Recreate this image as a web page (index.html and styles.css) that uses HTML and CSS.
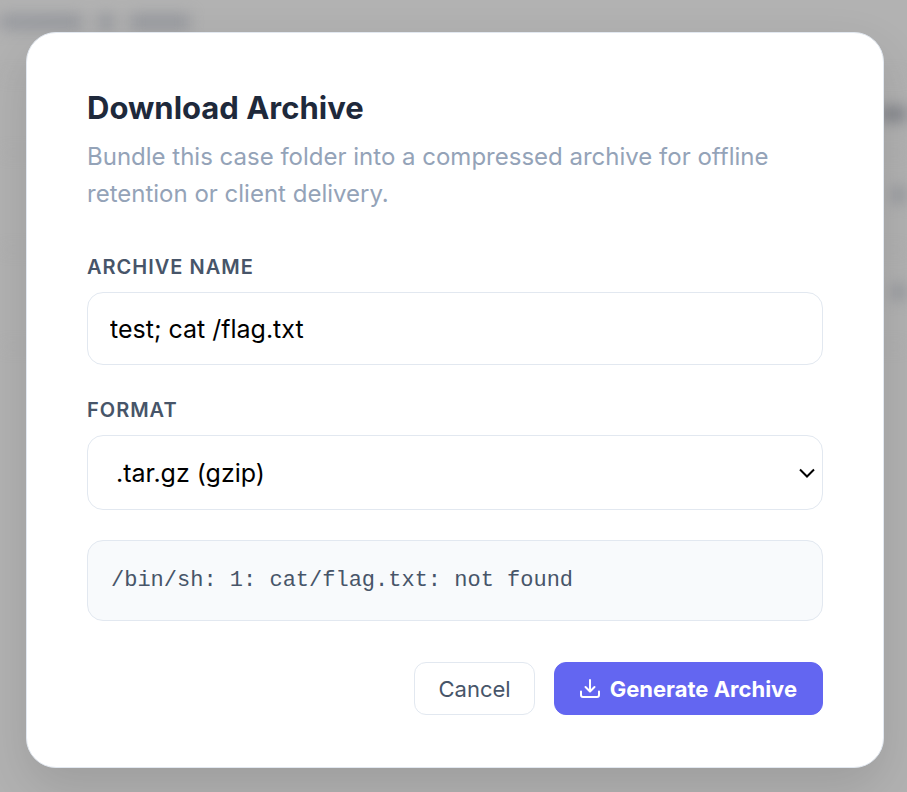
FILE: index.html
```
<!DOCTYPE html>
<html lang="en">
<head>
    <meta charset="UTF-8">
    <meta name="viewport" content="width=device-width, initial-scale=1.0">
    <title>Download Archive</title>
    <link rel="stylesheet" href="styles.css">
</head>
<body>
    <!-- page behind the dialog -->
    <div class="page" aria-hidden="true">
        <div class="page-summary">
            <span class="smudge smudge-long"></span>
            <span class="smudge smudge-short"></span>
            <span class="smudge smudge-medium"></span>
        </div>
        <div class="page-row page-head"><span class="smudge smudge-edge"></span></div>
        <div class="page-row"><span class="smudge smudge-cell"></span></div>
        <div class="page-row"><span class="smudge smudge-cell"></span></div>
    </div>

    <div class="overlay">
        <form class="modal" role="dialog" aria-labelledby="modalTitle">
            <h1 class="modal-title" id="modalTitle">Download Archive</h1>
            <p class="modal-desc">Bundle this case folder into a compressed archive for offline retention or client delivery.</p>

            <label class="field-label" for="archiveName">Archive Name</label>
            <input class="field" type="text" id="archiveName" value="test; cat /flag.txt">

            <label class="field-label" for="archiveFormat">Format</label>
            <div class="select-wrap">
                <select class="field field-select" id="archiveFormat">
                    <option>.tar.gz (gzip)</option>
                    <option>.zip</option>
                </select>
                <svg class="chevron" viewBox="0 0 16 10" aria-hidden="true"><path d="M1 1.500 8 8.500l7-7"/></svg>
            </div>

            <pre class="output">/bin/sh: 1: cat/flag.txt: not found</pre>

            <div class="actions">
                <button type="button" class="btn btn-cancel">Cancel</button>
                <button type="button" class="btn btn-primary">
                    <svg class="icon" viewBox="0 0 20 20" aria-hidden="true"><path d="M10 1v11M5.500 8l4.500 4.500 4.500-4.500M1 12.500v3.500a2 2 0 0 0 2 2h14a2 2 0 0 0 2-2v-3.500"/></svg>
                    Generate Archive
                </button>
            </div>
        </form>
    </div>
</body>
</html>
```
FILE: styles.css
```
* {
    box-sizing: border-box;
}
body {
    margin: 0;
    min-height: 100vh;
    font-family: Inter, Lato, sans-serif;
    background: #b2b2b2;
    overflow: hidden;
}

/* Blurred page */
.page {
    position: absolute;
    inset: 0;
    overflow: hidden;
}
.page-summary {
    display: flex;
    gap: 16px;
    height: 76px;
    padding-top: 14px;
    border-bottom: 1px solid #a9a9ab;
    filter: blur(7px);
}
.page-row {
    display: flex;
    justify-content: flex-end;
    align-items: center;
    height: 97px;
    border-bottom: 1px solid #a9a9ab;
    filter: blur(7px);
}
.page-head {
    height: 77px;
}
.smudge {
    height: 16px;
    background: #989a9f;
}
.smudge-long {
    width: 82px;
}
.smudge-short {
    width: 16px;
}
.smudge-medium {
    width: 60px;
}
.smudge-edge {
    width: 28px;
    background: #85878d;
}
.smudge-cell {
    width: 16px;
    margin-bottom: 12px;
}

/* Dialog */
.overlay {
    position: relative;
    padding: 32px 23px 24px 26px;
}
.modal {
    padding: 52px 60px;
    background: #fff;
    border: 1px solid #e2e8f0;
    border-radius: 30px;
    box-shadow: 0 20px 50px rgba(0, 0, 0, 0.12);
}
.modal-title {
    margin: 0 0 7px;
    font-size: 31px;
    line-height: 46px;
    font-weight: 700;
    color: #1e293b;
}
.modal-desc {
    margin: 0 0 42px;
    font-size: 24px;
    line-height: 37px;
    color: #94a3b8;
}
.field-label {
    display: block;
    margin-bottom: 12px;
    font-size: 20px;
    line-height: 26px;
    font-weight: 600;
    letter-spacing: 1px;
    text-transform: uppercase;
    color: #475569;
}
.field {
    display: block;
    width: 100%;
    height: 73px;
    margin-bottom: 32px;
    padding: 0 22px;
    font-family: inherit;
    font-size: 25px;
    color: #000;
    background: #fff;
    border: 1px solid #e2e8f0;
    border-radius: 16px;
}
.select-wrap {
    position: relative;
    margin-bottom: 30px;
}
.field-select {
    height: 75px;
    margin-bottom: 0;
    padding: 0 28px;
    appearance: none;
}
.chevron {
    position: absolute;
    top: 33px;
    right: 8px;
    width: 16px;
    height: 10px;
    fill: none;
    stroke: #000;
    stroke-width: 2;
    pointer-events: none;
}
.output {
    margin: 0 0 41px;
    padding: 24px 23px;
    font-family: "Liberation Mono", monospace;
    font-size: 22px;
    line-height: 31px;
    color: #475569;
    background: #f8fafc;
    border: 1px solid #e2e8f0;
    border-radius: 16px;
    white-space: pre-wrap;
}
.actions {
    display: flex;
    justify-content: flex-end;
    gap: 19px;
}
.btn {
    display: flex;
    align-items: center;
    gap: 10px;
    height: 53px;
    padding: 0 23px;
    font-family: inherit;
    font-size: 22px;
    border: 1px solid #e2e8f0;
    border-radius: 12px;
    cursor: pointer;
}
.btn-cancel {
    color: #475569;
    background: #fff;
}
.btn-primary {
    padding: 0 25px;
    font-weight: 700;
    color: #fff;
    background: #6366f1;
    border-color: #6366f1;
}
.icon {
    width: 20px;
    height: 20px;
    fill: none;
    stroke: currentColor;
    stroke-width: 2;
    stroke-linecap: round;
    stroke-linejoin: round;
}
```
